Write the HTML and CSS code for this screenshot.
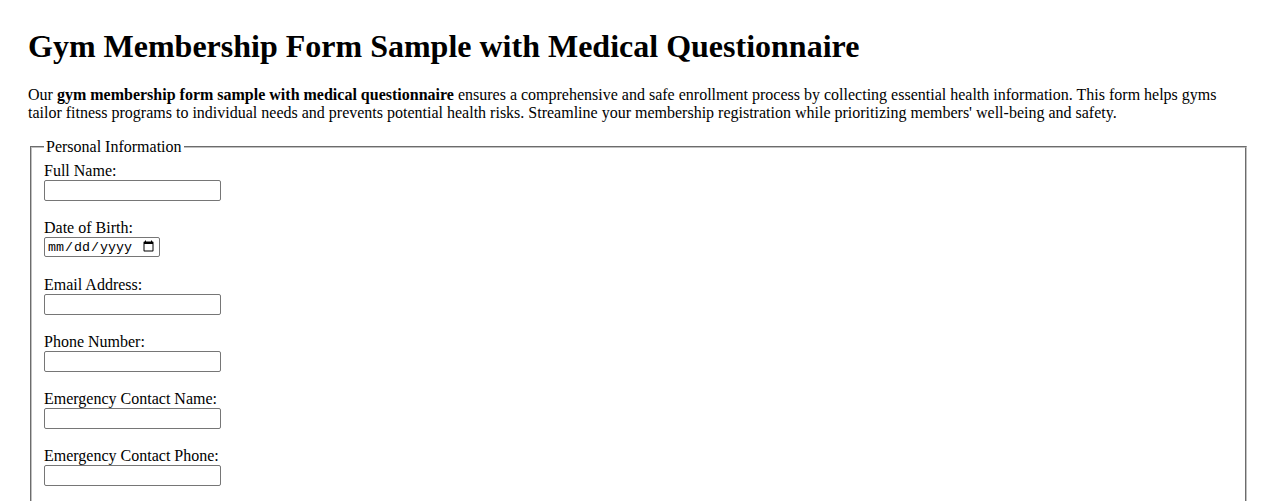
FILE: index.html
```html
<!DOCTYPE html>
<html lang="en">
<head>
<meta charset="utf-8">
<title>Gym Membership Form Sample with Medical Questionnaire</title>
<link rel="stylesheet" href="styles.css">
</head>
<body>
<h1 class="title">Gym Membership Form Sample with Medical Questionnaire</h1>
<p class="intro">Our <strong>gym membership form sample with medical questionnaire</strong> ensures a comprehensive and safe enrollment process by collecting essential health information. This form helps gyms tailor fitness programs to individual needs and prevents potential health risks. Streamline your membership registration while prioritizing members' well-being and safety.</p>
<form class="form">
  <fieldset class="section">
    <legend class="section-title">Personal Information</legend>
    <div class="field">
      <label for="fullName">Full Name:</label>
      <input class="text-input" type="text" id="fullName" name="fullName">
    </div>
    <div class="field field--date">
      <label for="dob">Date of Birth:</label>
      <input class="date-input" type="date" id="dob" name="dob">
    </div>
    <div class="field">
      <label for="email">Email Address:</label>
      <input class="text-input" type="email" id="email" name="email">
    </div>
    <div class="field">
      <label for="phone">Phone Number:</label>
      <input class="text-input" type="tel" id="phone" name="phone">
    </div>
    <div class="field">
      <label for="ecName">Emergency Contact Name:</label>
      <input class="text-input" type="text" id="ecName" name="ecName">
    </div>
    <div class="field">
      <label for="ecPhone">Emergency Contact Phone:</label>
      <input class="text-input" type="tel" id="ecPhone" name="ecPhone">
    </div>
  </fieldset>
</form>
</body>
</html>
```
FILE: styles.css
```css
html, body {
  background: #ffffff;
}
body {
  margin: 0;
  padding: 28px 29px 28px 28px;
  font-family: "Liberation Serif", "Times New Roman", serif;
  font-size: 16px;
  color: #000000;
}
.title {
  margin: 0 0 21.44px 0;
  font-size: 32px;
  font-weight: bold;
}
.intro {
  margin: 0 0 16px 0;
}
.form {
  margin: 0;
}
.section {
  margin: 0 2px;
  padding: 0.35em 0.75em 0.625em;
  border: 2px groove #c0c0c0;
  min-inline-size: min-content;
}
.section-title {
  padding: 0 2px;
}
.field {
  display: flex;
  flex-direction: column;
  align-items: flex-start;
  margin-bottom: 18px;
}
.field--date {
  margin-bottom: 19px;
}
.field label {
  display: block;
  line-height: 18px;
}
.text-input {
  box-sizing: border-box;
  width: 177px;
  height: 21px;
  margin: 0;
  padding: 1px 2px;
  border: 1px solid #767676;
  border-radius: 2px;
  font-family: "Liberation Sans", Arial, sans-serif;
  font-size: 13.33px;
  background: #ffffff;
}
.date-input {
  box-sizing: border-box;
  width: 116px;
  height: 20px;
  margin: 0;
  padding: 1px 2px;
  border: 1px solid #767676;
  border-radius: 2px;
  font-family: "Liberation Mono", "Courier New", monospace;
  font-size: 13.33px;
  background: #ffffff;
  color: #000000;
}
```
